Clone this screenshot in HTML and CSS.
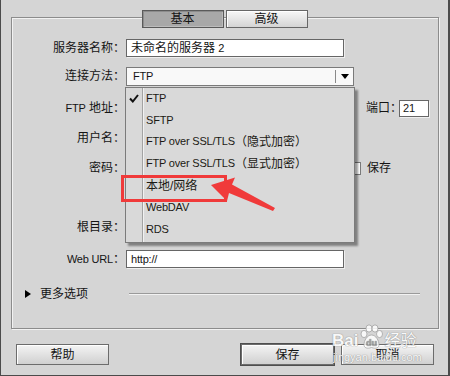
FILE: index.html
```html
<!DOCTYPE html>
<html lang="zh-CN">
<head>
<meta charset="utf-8">
<title>站点设置</title>
<link rel="stylesheet" href="styles.css">
</head>
<body>
<div class="window">
  <div class="tabs">
    <div class="tab active">基本</div>
    <div class="tab">高级</div>
  </div>
  <div class="group">
    <div class="form">
      <div class="row">
        <span class="lbl">服务器名称：</span>
        <div class="input w-name"><span>未命名的服务器 <span class="en">2</span></span></div>
      </div>
      <div class="row r2">
        <span class="lbl">连接方法：</span>
        <div class="select">
          <span class="en">FTP</span>
          <span class="sel-btn"><svg width="8" height="5" viewBox="0 0 8 5"><path d="M0 0H8L4 5Z" fill="#000"/></svg></span>
          <ul class="menu">
            <li><svg class="check" width="10" height="9" viewBox="0 0 10 9"><path d="M1 4.5L3.8 7.5L9 1" fill="none" stroke="#111" stroke-width="2"/></svg><span class="en">FTP</span></li>
            <li><span class="en">SFTP</span></li>
            <li><span class="en">FTP over SSL/TLS</span><span class="cj">（隐式加密）</span></li>
            <li><span class="en">FTP over SSL/TLS</span><span class="cj">（显式加密）</span></li>
            <li>本地/网络</li>
            <li><span class="en">WebDAV</span></li>
            <li><span class="en">RDS</span></li>
          </ul>
        </div>
      </div>
      <div class="row r3">
        <span class="lbl"><span class="en">FTP</span> 地址：</span>
        <div class="input w-host"></div>
        <span class="port-lbl">端口：</span>
        <div class="input w-port"><span class="en">21</span></div>
      </div>
      <div class="row">
        <span class="lbl">用户名：</span>
        <div class="input w-user"></div>
      </div>
      <div class="row">
        <span class="lbl">密码：</span>
        <div class="input w-pass"></div>
        <span class="checkbox"></span>
        <span class="save-lbl">保存</span>
      </div>
      <div class="row"></div>
      <div class="row r7">
        <span class="lbl">根目录：</span>
        <div class="input w-root"></div>
      </div>
      <div class="row r8">
        <span class="lbl"><span class="en">Web URL</span>：</span>
        <div class="input w-url"><span class="en">http://</span></div>
      </div>
      <div class="row r9 more">
        <svg class="tri" width="6" height="8" viewBox="0 0 6 8"><path d="M0 0L6 4L0 8Z" fill="#000"/></svg>
        <span>更多选项</span>
        <span class="rule"></span>
      </div>
    </div>
  </div>
  <div class="buttons">
    <div class="btn">帮助</div>
    <div class="btn default">保存</div>
    <div class="btn">取消</div>
  </div>

  <div class="wm">
    <div class="wm-top">
      <span class="wm-bai">Bai</span>
      <svg class="wm-paw" width="24" height="26" viewBox="0 0 24 26">
        <g fill="#fff" stroke="#9a9a9a" stroke-width="0.8">
          <ellipse cx="5" cy="10" rx="3" ry="3.6"/>
          <ellipse cx="10" cy="4.5" rx="3" ry="3.6"/>
          <ellipse cx="16" cy="4.5" rx="3" ry="3.6"/>
          <ellipse cx="20.5" cy="10" rx="3" ry="3.6"/>
          <path d="M12.5 11C8 11 5 17 5 20.5C5 24 8 25 12.5 23.5C17 25 20 24 20 20.5C20 17 17 11 12.5 11Z"/>
        </g>
        <text x="12.5" y="22" font-size="9" text-anchor="middle" fill="#9a9a9a" font-family="Liberation Sans" font-weight="bold">du</text>
      </svg>
      <span class="wm-jy">经验</span>
    </div>
    <div class="wm-url">jingyan.baidu.com</div>
  </div>

  <svg class="annot" width="450" height="376" viewBox="0 0 450 376">
    <rect x="122.5" y="176.5" width="103" height="24" fill="none" stroke="#f03a3a" stroke-width="3"/>
    <polygon points="211,185 235,177.5 232,184.5 275,208 273,211 229,193 227,201" fill="#f03a3a"/>
  </svg>
</div>
</body>
</html>
```
FILE: styles.css
```css
* {
  box-sizing: border-box;
}

body {
  margin: 0;
  background: #d5d5d5;
  font: 12px "Liberation Sans", "Noto Sans CJK SC", sans-serif;
  color: #141414;
}

.en {
  font-family: "Liberation Sans", sans-serif;
  font-size: 11px;
  letter-spacing: -0.2px;
}

.window {
  position: relative;
  width: 450px;
  height: 376px;
  border-left: 1px solid #4b4b4b;
  border-right: 2px solid #4b4b4b;
  border-bottom: 1px solid #4b4b4b;
  padding-top: 10px;
  background: #d5d5d5;
  overflow: hidden;
}

/* tabs */
.tabs {
  position: relative;
  z-index: 2;
  display: flex;
  justify-content: center;
  gap: 2px;
  height: 18px;
  margin-bottom: -11px;
}

.tab {
  width: 82px;
  height: 18px;
  display: flex;
  align-items: center;
  justify-content: center;
  line-height: 1;
  border: 1px solid #676767;
  background: linear-gradient(#f7f7f7, #d4d4d4);
  box-shadow: inset 1px 1px 0 #ffffff;
}

.tab.active {
  background: #a8a8a8;
  border-color: #5a5a5a;
  box-shadow: inset 1px 1px 0 #8c8c8c, inset -1px -1px 0 #bcbcbc;
}

/* group box */
.group {
  margin: 0 9px 0 10px;
  height: 312px;
  border: 1px solid #8c8c8c;
  box-shadow: inset 1px 1px 0 #f2f2f2, 1px 1px 0 #f2f2f2;
  padding-top: 21px;
}

.form {
  display: flex;
  flex-direction: column;
  gap: 12px;
}

.row {
  display: flex;
  align-items: center;
  height: 18px;
  line-height: 1;
}

.r2 { margin-top: -2px; }
.r3 { margin-top: 2px; }
.r7 { margin-top: -1px; }
.r8 { margin-top: 2px; }
.r9 { margin-top: 5px; }

.lbl {
  width: 113px;
  margin-right: 1px;
  text-align: right;
  white-space: nowrap;
}

.input {
  height: 18px;
  background: #ffffff;
  border: 1px solid #666666;
  box-shadow: 1px 1px 0 #efefef;
  padding: 0 4px;
  display: flex;
  align-items: center;
  white-space: nowrap;
}

.w-name { width: 218px; }
.w-host { width: 228px; margin-right: 12px; }
.w-port { width: 30px; height: 17px; padding-left: 3px; }
.w-user { width: 218px; }
.w-pass { width: 215px; margin-right: 7px; }
.w-root { width: 218px; }
.w-url { width: 218px; }

.port-lbl {
  width: 33px;
  white-space: nowrap;
}

.checkbox {
  width: 13px;
  height: 13px;
  background: #ffffff;
  border: 1px solid #7a7a7a;
  margin-right: 6px;
}

/* select */
.select {
  position: relative;
  z-index: 5;
  width: 228px;
  height: 19px;
  border: 1px solid #7a7a7a;
  background: #f9f9f9;
  display: flex;
  align-items: center;
  padding-left: 6px;
}

.sel-btn {
  margin-left: auto;
  width: 18px;
  height: 13px;
  border-left: 1px solid #8a8a8a;
  display: flex;
  align-items: center;
  justify-content: center;
}

.menu {
  position: absolute;
  top: 19px;
  left: -2px;
  width: 230px;
  height: 156px;
  margin: 0;
  padding: 0;
  list-style: none;
  border: 1px solid #7b7b7b;
  background:
    linear-gradient(to right, transparent 16px, #a3a3a3 16px, #a3a3a3 17px, #f1f1f1 17px, #f1f1f1 18px, transparent 18px),
    #d9d9d9;
  box-shadow: 3px 3px 2px rgba(0, 0, 0, 0.4);
}

.menu li {
  position: relative;
  height: 21.8px;
  display: flex;
  align-items: center;
  padding-left: 20px;
  white-space: nowrap;
  color: #1c1a14;
}

.check {
  position: absolute;
  left: 3px;
  top: 6px;
}

/* more options */
.more {
  padding-left: 13px;
}

.tri {
  margin-right: 9px;
}

.rule {
  margin-left: auto;
  margin-right: 18px;
  width: 291px;
  height: 2px;
  border-top: 1px solid #9a9a9a;
  border-bottom: 1px solid #f2f2f2;
}

/* buttons */
.buttons {
  display: flex;
  padding: 0 14px 0 15px;
  margin-top: 15px;
}

.btn {
  width: 93px;
  height: 21px;
  display: flex;
  align-items: center;
  justify-content: center;
  line-height: 1;
  border: 1px solid #6c6c6c;
  background: linear-gradient(#f4f4f4, #d0d0d0);
  box-shadow: inset 1px 1px 0 #ffffff;
}

.btn.default {
  margin-left: auto;
  margin-right: 7px;
  outline: 1px solid #4e4e4e;
}

/* watermark */
.wm {
  position: absolute;
  left: 331px;
  top: 320px;
  width: 95px;
  color: #ffffff;
  opacity: 0.85;
  pointer-events: none;
  text-shadow: 0 0 1px #8a8a8a, 0 0 1px #8a8a8a;
}

.wm-top {
  display: flex;
  align-items: flex-end;
  height: 30px;
}

.wm-bai {
  font: bold 17px "Liberation Sans", sans-serif;
  line-height: 1;
  margin-bottom: 1px;
}

.wm-paw {
  margin: 0 1px;
}

.wm-jy {
  font-size: 16px;
  line-height: 1;
  margin-bottom: 1px;
}

.wm-url {
  font: 11px "Liberation Sans", sans-serif;
  line-height: 1;
  margin-top: 2px;
  margin-left: 1px;
}

/* annotation overlay */
.annot {
  position: absolute;
  left: -1px;
  top: 0;
  z-index: 10;
  pointer-events: none;
}
```
